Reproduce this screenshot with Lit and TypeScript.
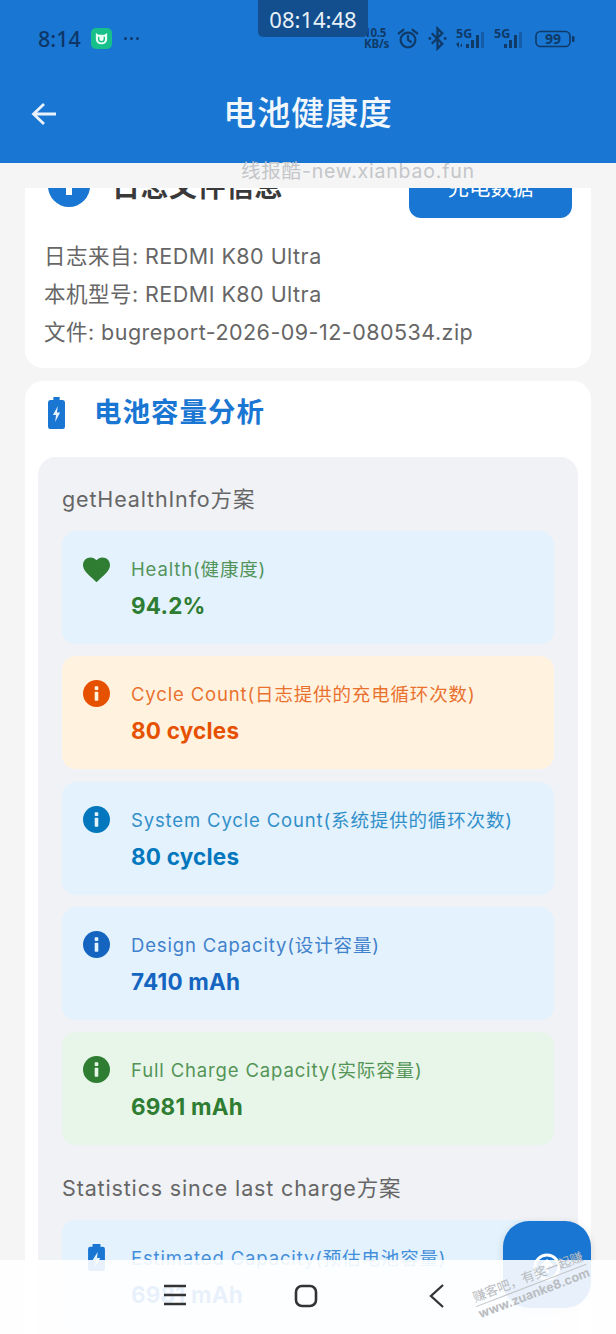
import { LitElement, html, css, svg } from "lit";
import { customElement } from "lit/decorators.js";

const info = svg`<circle cx="12" cy="12" r="12" fill="currentColor"/><rect x="10.4" y="10.4" width="3.2" height="8" rx=".6" fill="var(--ib)"/><rect x="10.4" y="5.6" width="3.2" height="3.2" rx=".6" fill="var(--ib)"/>`;
const heart = svg`<path fill="currentColor" d="M12 24.2 10.1 22.4C3.6 16.6 0 13.3 0 8.9 0 5 3 2.2 6.7 2.2 8.8 2.2 10.8 3.200 12 4.700 13.200 3.200 15.200 2.200 17.300 2.200 21 2.200 24 5 24 8.900 24 13.300 20.400 16.600 13.900 22.400Z"/>`;
const bat = svg`<path fill="currentColor" d="M8.500 0h7v2.500h2A2 2 0 0 1 19.500 4.500v17.500a2 2 0 0 1-2 2h-11a2 2 0 0 1-2-2V4.500a2 2 0 0 1 2-2h2z"/><path fill="#e3f2fd" d="M13 7 8.500 14.500h3l-1 6 5-8h-3z"/>`;

interface Item { cls: string; label: string; value: string; icon: "info" | "heart" | "bat" }
const items: Item[] = [
  { cls: "blue green-text", label: "Health(健康度)", value: "94.2%", icon: "heart" },
  { cls: "orange", label: "Cycle Count(日志提供的充电循环次数)", value: "80 cycles", icon: "info" },
  { cls: "blue lb", label: "System Cycle Count(系统提供的循环次数)", value: "80 cycles", icon: "info" },
  { cls: "blue db", label: "Design Capacity(设计容量)", value: "7410 mAh", icon: "info" },
  { cls: "green", label: "Full Charge Capacity(实际容量)", value: "6981 mAh", icon: "info" },
];

@customElement("app-root")
export class AppRoot extends LitElement {
  static styles = css`
    :host { display: block; width: 616px; height: 1334px; font-family: "Inter", "Noto Sans CJK SC", sans-serif; }
    .page { position: relative; width: 616px; height: 1334px; overflow: hidden; background: #f5f5f5; display: flex; flex-direction: column; }
    .appbar { flex: none; height: 163px; background: #1976d2; display: flex; flex-direction: column; }
    .status { height: 77px; display: flex; align-items: center; padding: 0 41px 0 38px; color: #0f3a68; justify-content: space-between; }
    .st-left { display: flex; align-items: center; gap: 10px; }
    .clock { font-family: "Noto Sans", sans-serif; font-size: 21.5px; font-weight: 500; line-height: 1; color: #0e3768; }
    .mi { width: 21px; height: 21px; border-radius: 5px; background: #17c08a; display: flex; align-items: center; justify-content: center; }
    .dots { display: flex; gap: 3px; margin-left: 2px; }
    .dots i { width: 3px; height: 3px; border-radius: 50%; background: #0f3a68; }
    .st-right { display: flex; align-items: center; color: #0f3a68; }
    .speed { font-family: "Noto Sans", sans-serif; font-size: 11.5px; font-weight: 700; line-height: 10.5px; width: 32px; white-space: nowrap; letter-spacing: -.2px; }
    .bar { position: relative; flex: 1; display: flex; align-items: center; justify-content: center; padding-bottom: 15px; }
    .back { position: absolute; left: 30px; top: 23px; width: 28px; height: 28px; color: #eaf3fb; }
    .title { font-size: 33px; font-weight: 500; color: #f2f7fc; line-height: 44px; letter-spacing: .9px; }
    .pill { position: absolute; left: 258px; top: 0; width: 110px; height: 37px; background: #134f8f; border-radius: 0 0 5px 5px; color: #e9f1f8; font-family: "Noto Sans", sans-serif; font-size: 22px; display: flex; align-items: center; justify-content: center; line-height: 1; }
    .wm { position: absolute; left: 241px; top: 158px; font-size: 19.5px; line-height: 26px; color: #c4c6c9; white-space: nowrap; letter-spacing: .8px; }
    .scroller { flex: 1; margin-top: 25px; padding: 0 25px; overflow: hidden; display: flex; flex-direction: column; gap: 13px; }
    .card { background: #fff; border-radius: 0 0 18px 18px; flex: none; }
    .file { height: 180px; padding: 0 19px 0 20px; }
    .file-top { height: 31px; position: relative; overflow: hidden; display: flex; justify-content: space-between; }
    .file-h { display: flex; gap: 22px; margin-top: -24px; margin-left: 3px; align-items: center; height: 43px; }
    .dotbig { width: 42px; height: 42px; border-radius: 50%; background: #1976d2; display: flex; align-items: flex-start; justify-content: center; }
    .dotbig i { width: 6px; height: 30px; background: #fff; }
    .file-t { font-size: 28px; font-weight: 700; color: #3a3a3a; line-height: 42px; letter-spacing: .5px; padding-top: 2px; }
    .cbtn { width: 163px; height: 30px; background: #1976d2; border-radius: 0 0 12px 12px; color: #fff; font-size: 21.5px; line-height: 1; display: flex; align-items: flex-start; justify-content: center; overflow: hidden; }
    .cbtn span { margin-top: -11px; }
    .lines { padding-top: 18px; font-size: 21.5px; line-height: 38px; color: #666; letter-spacing: .47px; white-space: nowrap; margin-left: -1px; }
    .cap { border-radius: 18px 18px 0 0; padding: 0 13px; flex: 1; }
    .cap-h { height: 76px; display: flex; align-items: center; gap: 29px; padding: 0 0 13px 10px; box-sizing: border-box; }
    .cap-t { font-size: 27.5px; font-weight: 700; color: #1976d2; line-height: 1; letter-spacing: 1px; }
    .panel { background: #f0f2f5; border-radius: 18px 18px 0 0; padding: 23px 24px 0 24px; height: 900px; }
    .sec { font-size: 21.5px; color: #666; line-height: 42px; height: 42px; margin-bottom: 11px; white-space: nowrap; margin-top: -2px; letter-spacing: .85px; }
    .sec.second { margin-top: 22px; margin-bottom: 11px; }
    .items { display: flex; flex-direction: column; gap: 12.3px; }
    .item { height: 113px; border-radius: 14px; display: flex; padding: 23px 20px 0 20px; gap: 20px; box-sizing: border-box; }
    .ic { width: 29px; height: 29px; flex: none; padding: 1px 0 0 0; }
    .ic svg { display: block; width: 27px; height: 27px; margin-left: 1px; }
    .lbl { font-size: 18.5px; line-height: 30px; opacity: .8; white-space: nowrap; letter-spacing: .85px; }
    .val { font-size: 22.5px; font-weight: 700; line-height: 34px; margin-top: 5px; white-space: nowrap; letter-spacing: .2px; }
    .blue { background: #e3f2fd; color: #1976d2; --ib: #e3f2fd; }
    .lb { color: #0277bd; }
    .db { color: #1565c0; }
    .orange { background: #fff3e0; color: #e65100; --ib: #fff3e0; }
    .green { background: #e8f5e9; color: #2e7d32; --ib: #e8f5e9; }
    .green-text { color: #2e7d32; }
    .nav { position: absolute; left: 0; right: 0; bottom: 0; height: 74px; background: rgba(255,255,255,.9); }
    .nav svg { position: absolute; color: #333; }
    .fab { position: absolute; left: 503px; top: 1221px; width: 88px; height: 87px; border-radius: 26px; background: #1976d2; display: flex; align-items: center; justify-content: center; box-shadow: 0 2px 8px rgba(0,0,0,.12); }
    .fab svg { width: 30px; height: 30px; margin-top: 4px; }
    .zk { position: absolute; left: 472px; top: 1269px; color: #b9bcc0; font-size: 13px; line-height: 15px; transform: rotate(-21deg); white-space: nowrap; text-align: center; }
    .zk b { display: block; font-weight: 400; border-bottom: 1px solid #c3c5c8; padding-bottom: 1px; }
    .zk span { display: block; font-size: 12.5px; font-weight: 700; }
  `;

  private itemTpl(i: Item) {
    const icons = { info, heart, bat };
    return html`<div class="item ${i.cls}">
      <div class="ic"><svg viewBox="0 0 24 24">${icons[i.icon]}</svg></div>
      <div><div class="lbl">${i.label}</div><div class="val">${i.value}</div></div>
    </div>`;
  }

  render() {
    return html`<div class="page">
      <div class="appbar">
        <div class="status">
          <div class="st-left">
            <span class="clock">8:14</span>
            <span class="mi"><svg width="15" height="15" viewBox="0 0 16 16"><path fill="#e8fff5" d="M2 2l3 2h6l3-2v7a5 5 0 0 1-5 5H7a5 5 0 0 1-5-5z"/><path fill="none" stroke="#17c08a" stroke-width="1.500" d="M5 6v2.500a3 3 0 0 0 6 0V6"/></svg></span>
            <span class="dots"><i></i><i></i><i></i></span>
          </div>
          <div class="st-right">
            <span class="speed">10.5<br />KB/s</span>
            <svg width="24" height="24" viewBox="0 0 26 26" fill="none" stroke="currentColor" stroke-width="2.400"><circle cx="13" cy="14" r="8"/><path d="M13 9.500V14l3 2M3 7l5-4M23 7l-5-4" stroke-linecap="round"/></svg>
            <svg style="margin-left:7px" width="21" height="25" viewBox="0 0 22 26" fill="none" stroke="currentColor" stroke-width="2.400"><path d="M5 7.500l11 11-5 5V2.500l5 5-11 11"/><circle cx="3" cy="13" r="1.500" fill="currentColor" stroke="none"/><circle cx="19" cy="13" r="1.500" fill="currentColor" stroke="none"/></svg>
            ${[0, 1].map((n) => svg`<svg style="margin-left:${n ? 3 : 7}px" width="35" height="24" viewBox="0 0 35 24">
              <text x="1" y="11" font-size="12.500" font-weight="700" font-family="Noto Sans" fill="currentColor">5G</text>
              ${n === 0 ? svg`<path d="M1 17l3-2v6zM7 20l-2-1 2-3z" fill="currentColor"/>` : ""}
              <g fill="currentColor"><rect x="11" y="17" width="3" height="4"/><rect x="16" y="13" width="3" height="8"/><rect x="21" y="8" width="3" height="13"/><rect x="26" y="5" width="3" height="16" opacity=".4"/></g></svg>`)}
            <svg style="margin-left:7px" width="40" height="20" viewBox="0 0 40 20"><rect x="1" y="2.500" width="34" height="15" rx="4.500" fill="none" stroke="currentColor" stroke-width="1.600"/><rect x="37" y="7" width="2.500" height="6" rx="1" fill="currentColor"/><text x="18" y="15" text-anchor="middle" font-size="14" font-weight="700" font-family="Noto Sans" fill="currentColor">99</text></svg>
          </div>
        </div>
        <div class="bar">
          <svg class="back" viewBox="0 0 28 28" fill="none" stroke="currentColor" stroke-width="2.800"><path d="M26 14H3M14 4 3.500 14 14 24"/></svg>
          <span class="title">电池健康度</span>
        </div>
      </div>
      <div class="scroller">
        <div class="card file">
          <div class="file-top">
            <div class="file-h"><span class="dotbig"><i></i></span><span class="file-t">日志文件信息</span></div>
            <div class="cbtn"><span>充电数据</span></div>
          </div>
          <div class="lines">
            <div>日志来自: REDMI K80 Ultra</div>
            <div>本机型号: REDMI K80 Ultra</div>
            <div>文件: bugreport-2026-09-12-080534.zip</div>
          </div>
        </div>
        <div class="card cap">
          <div class="cap-h">
            <svg width="17" height="32" viewBox="0 0 19 32" preserveAspectRatio="none"><path fill="#1976d2" d="M6 0h7v3h3.500A2.500 2.500 0 0 1 19 5.500v24a2.500 2.500 0 0 1-2.500 2.500h-14A2.500 2.500 0 0 1 0 29.500v-24A2.500 2.500 0 0 1 2.500 3H6z"/><path fill="#e8f2fb" d="M11 9 5.500 18H9l-1 7 5.500-9.500H10z"/></svg>
            <span class="cap-t">电池容量分析</span>
          </div>
          <div class="panel">
            <div class="sec">getHealthInfo方案</div>
            <div class="items">${items.map((i) => this.itemTpl(i))}</div>
            <div class="sec second">Statistics since last charge方案</div>
            ${this.itemTpl({ cls: "blue", label: "Estimated Capacity(预估电池容量)", value: "6981 mAh", icon: "bat" })}
          </div>
        </div>
      </div>
      <div class="pill">08:14:48</div>
      <div class="wm">线报酷-new.xianbao.fun</div>
      <div class="fab"><svg viewBox="0 0 30 30" fill="none" stroke="#fff" stroke-width="3"><circle cx="15" cy="15" r="12"/><path d="M15 21V10M10 14l5-5 5 5"/></svg></div>
      <div class="nav">
        <svg style="left:163px;top:24px" width="24" height="22" viewBox="0 0 24 22" fill="none" stroke="currentColor" stroke-width="2.600"><path d="M1 2h22M1 11h22M1 20h22"/></svg>
        <svg style="left:294px;top:24px" width="24" height="24" viewBox="0 0 24 24" fill="none" stroke="currentColor" stroke-width="2.600"><rect x="2" y="2" width="20" height="20" rx="6"/></svg>
        <svg style="left:428px;top:23px" width="18" height="26" viewBox="0 0 18 26" fill="none" stroke="currentColor" stroke-width="2.300"><path d="M15 2 3 13l12 11"/></svg>
      </div>
      <div class="zk"><b>赚客吧，有奖一起赚</b><span>www.zuanke8.com</span></div>
    </div>`;
  }
}
